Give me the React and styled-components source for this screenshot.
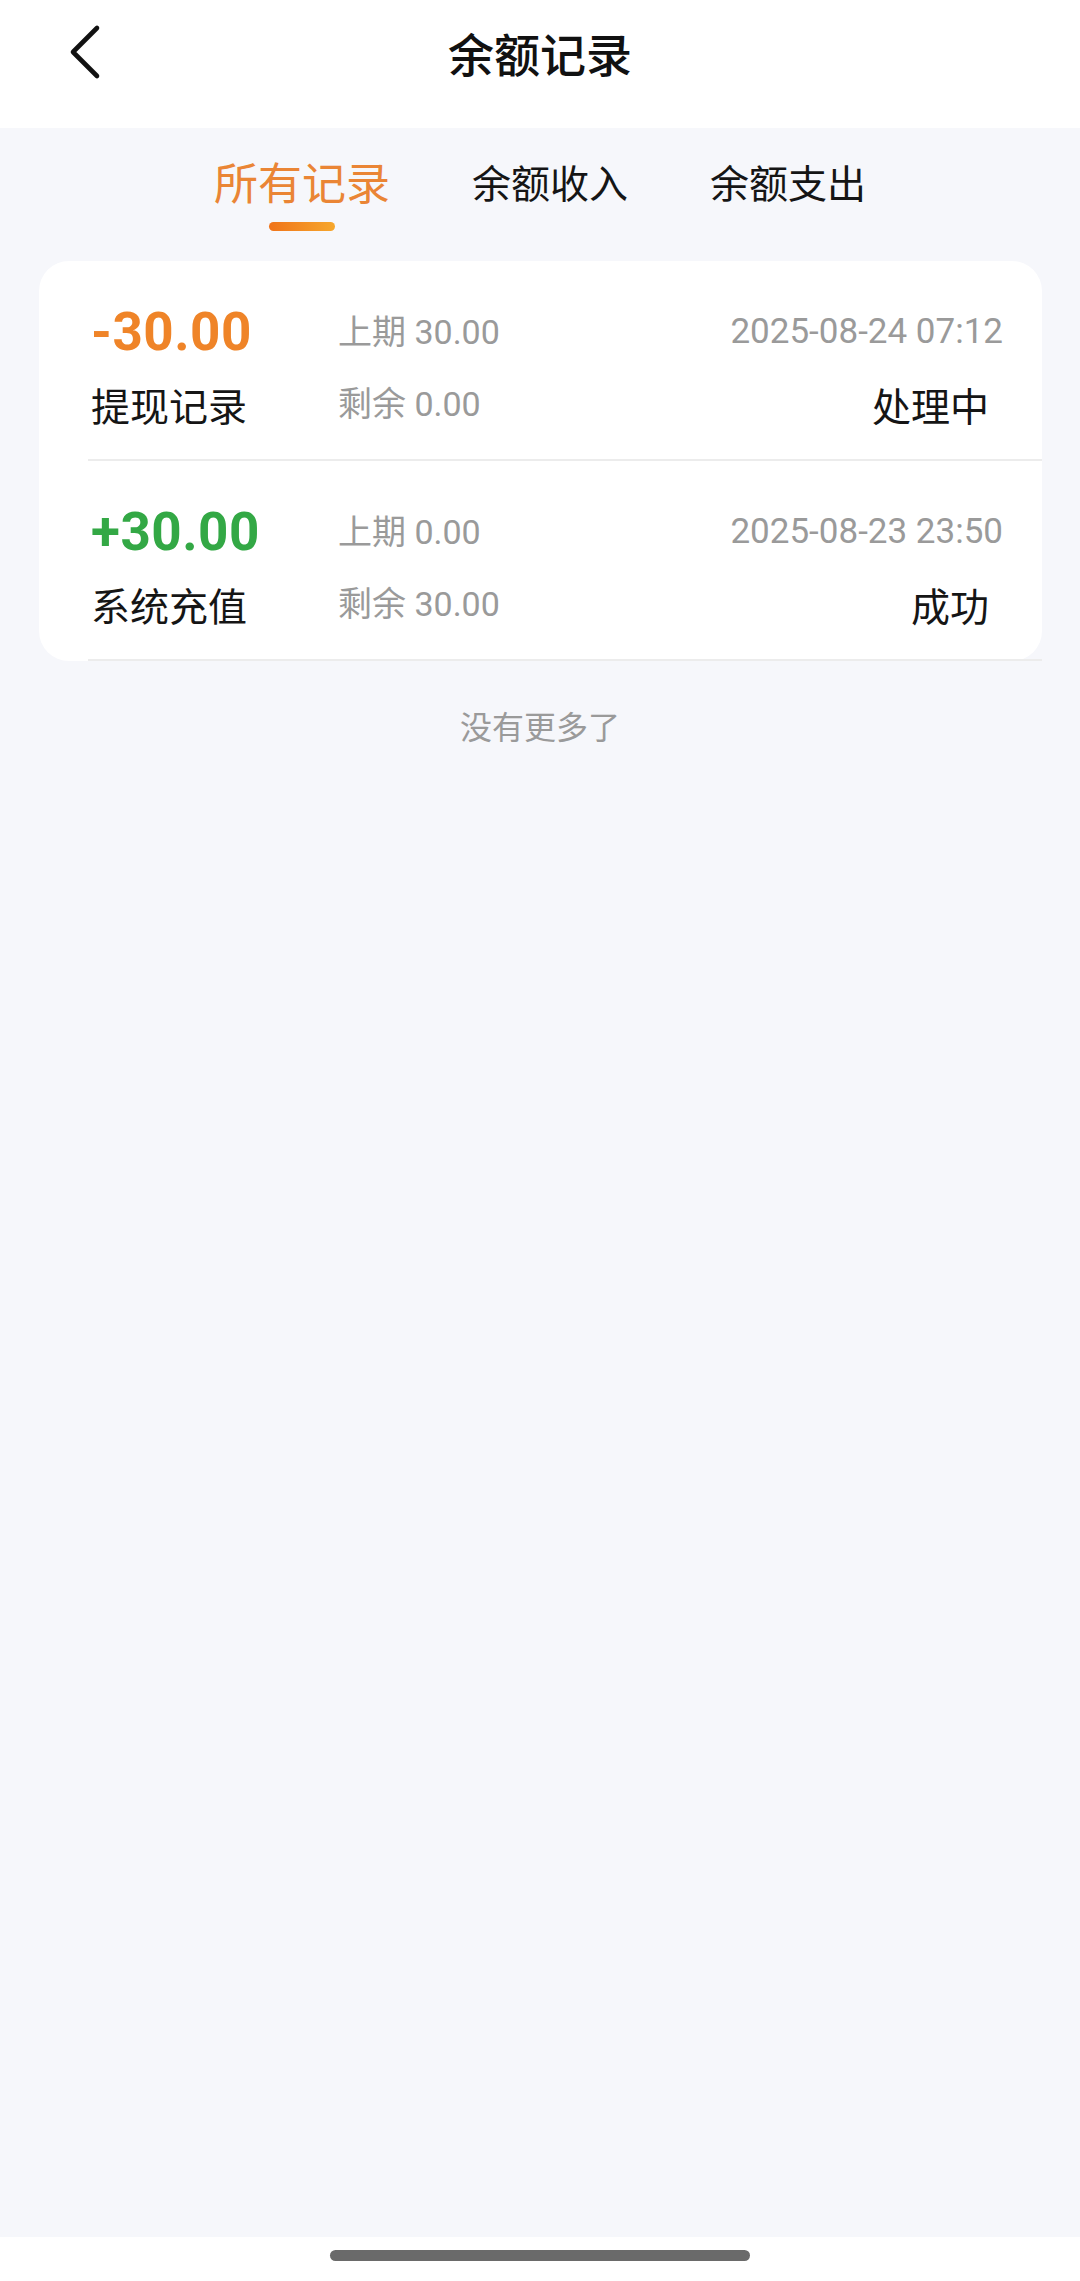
import React, { useState } from "react";
import styled, { createGlobalStyle } from "styled-components";

const GlobalStyle = createGlobalStyle`
  html, body { margin: 0; padding: 0; }
  body {
    font-family: Roboto, "Noto Sans CJK SC", "Noto Sans", sans-serif;
    background: #ffffff;
    -webkit-font-smoothing: antialiased;
  }
  * { box-sizing: border-box; }
`;

const Page = styled.div`
  min-height: 100vh;
  display: flex;
  flex-direction: column;
  background: #f6f7fb;
`;

const Header = styled.header`
  height: 128px;
  background: #ffffff;
  padding-top: 22px;
  display: grid;
  grid-template-columns: 1fr auto 1fr;
  grid-template-rows: 60px;
  align-items: center;
  flex-shrink: 0;
`;

const BackButton = styled.button`
  justify-self: start;
  margin-left: 68px;
  padding: 0;
  border: none;
  background: none;
  display: flex;
  align-items: center;
  cursor: pointer;
`;

const Title = styled.h1`
  margin: 0;
  font-family: "Noto Sans CJK SC", sans-serif;
  font-size: 46px;
  line-height: 60px;
  font-weight: 500;
  color: #111111;
`;

const Main = styled.main`
  flex: 1;
  display: flex;
  flex-direction: column;
`;

const Tabs = styled.nav`
  display: flex;
  justify-content: center;
  align-items: flex-start;
  gap: 82px;
  padding: 23px 0 30px;
`;

const Tab = styled.button`
  display: flex;
  flex-direction: column;
  align-items: center;
  padding: 0;
  border: none;
  background: none;
  cursor: pointer;
  font-family: "Noto Sans CJK SC", sans-serif;
  font-size: ${(p) => (p.$active ? "44px" : "39px")};
  line-height: 60px;
  font-weight: 400;
  color: ${(p) => (p.$active ? "#ea8535" : "#151515")};
`;

const TabBar = styled.span`
  display: block;
  margin-top: 11px;
  width: 66px;
  height: 9px;
  border-radius: 5px;
  background: ${(p) =>
    p.$active ? "linear-gradient(90deg, #f0741a 0%, #f6a72c 100%)" : "transparent"};
`;

const Card = styled.section`
  margin: 0 38px 0 39px;
  background: #ffffff;
  border-radius: 30px;
`;

const Row = styled.div`
  margin-left: 49px;
  padding: 41px 39px 25px 3px;
  border-bottom: 2px solid #ececec;
  display: grid;
  grid-template-columns: 247px 1fr auto;
  grid-template-rows: 60px 60px;
  row-gap: 12px;
  align-items: center;
`;

const Amount = styled.div`
  font-family: Roboto, sans-serif;
  font-size: 53px;
  line-height: 60px;
  font-weight: 700;
  letter-spacing: 0.5px;
  color: ${(p) => (p.$positive ? "#33a845" : "#ef8428")};
`;

const Label = styled.div`
  font-family: "Noto Sans CJK SC", sans-serif;
  font-size: 39px;
  line-height: 60px;
  color: #151515;
`;

const Meta = styled.div`
  font-family: Roboto, "Noto Sans CJK SC", sans-serif;
  font-size: 34px;
  line-height: 60px;
  color: #9a9a9a;
`;

const DateText = styled.div`
  justify-self: end;
  font-family: Roboto, sans-serif;
  font-size: 35px;
  line-height: 60px;
  color: #9a9a9a;
`;

const Status = styled.div`
  justify-self: end;
  margin-right: 14px;
  font-family: "Noto Sans CJK SC", sans-serif;
  font-size: 39px;
  line-height: 60px;
  color: #151515;
`;

const EndNote = styled.div`
  margin-top: 44px;
  text-align: center;
  font-family: "Noto Sans CJK SC", sans-serif;
  font-size: 32px;
  line-height: 40px;
  color: #9a9a9a;
`;

const HomeBar = styled.div`
  height: 44px;
  background: #ffffff;
  display: flex;
  justify-content: center;
  padding-top: 13px;
  flex-shrink: 0;
`;

const HomeIndicator = styled.span`
  display: block;
  width: 420px;
  height: 11px;
  border-radius: 6px;
  background: #6a6a6a;
`;

const records = [
  {
    amount: "-30.00",
    positive: false,
    label: "提现记录",
    prev: "上期 30.00",
    rest: "剩余 0.00",
    date: "2025-08-24 07:12",
    status: "处理中",
  },
  {
    amount: "+30.00",
    positive: true,
    label: "系统充值",
    prev: "上期 0.00",
    rest: "剩余 30.00",
    date: "2025-08-23 23:50",
    status: "成功",
  },
];

const tabs = ["所有记录", "余额收入", "余额支出"];

function BackIcon() {
  return (
    <svg width="34" height="56" viewBox="0 0 34 56" fill="none">
      <path
        d="M29 4 L5 28 L29 52"
        stroke="#111111"
        strokeWidth="4.6"
        strokeLinecap="round"
        strokeLinejoin="round"
      />
    </svg>
  );
}

export default function App() {
  const [active, setActive] = useState(0);
  return (
    <>
      <GlobalStyle />
      <Page>
        <Header>
          <BackButton aria-label="返回">
            <BackIcon />
          </BackButton>
          <Title>余额记录</Title>
          <span />
        </Header>
        <Main>
          <Tabs>
            {tabs.map((t, i) => (
              <Tab key={t} $active={i === active} onClick={() => setActive(i)}>
                {t}
                <TabBar $active={i === active} />
              </Tab>
            ))}
          </Tabs>
          <Card>
            {records.map((r) => (
              <Row key={r.date}>
                <Amount $positive={r.positive}>{r.amount}</Amount>
                <Meta>{r.prev}</Meta>
                <DateText>{r.date}</DateText>
                <Label>{r.label}</Label>
                <Meta>{r.rest}</Meta>
                <Status>{r.status}</Status>
              </Row>
            ))}
          </Card>
          <EndNote>没有更多了</EndNote>
        </Main>
        <HomeBar>
          <HomeIndicator />
        </HomeBar>
      </Page>
    </>
  );
}
